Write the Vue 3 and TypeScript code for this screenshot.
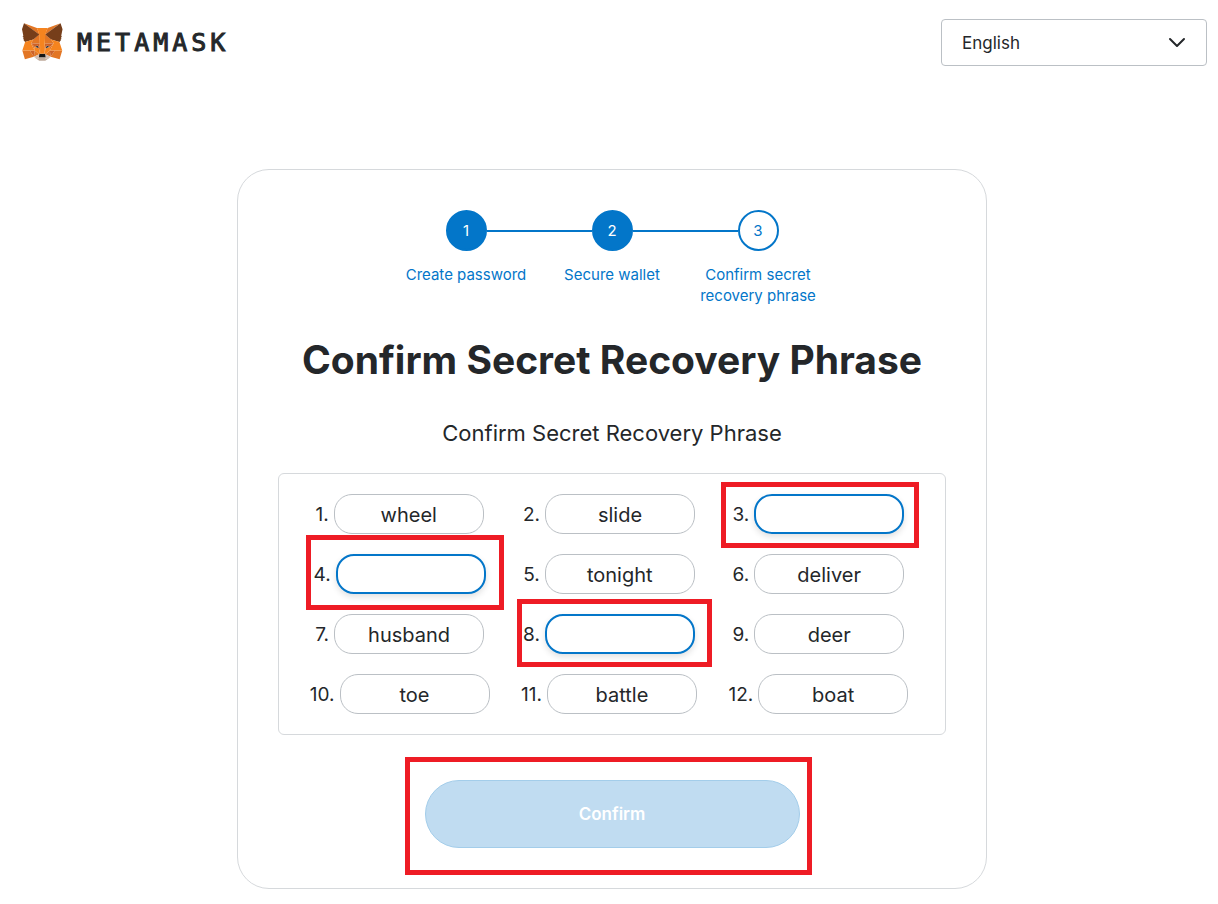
<script setup lang="ts">
import { reactive, ref } from 'vue'

interface Word {
  id: number
  value: string
  blank: boolean
  mark?: string
}

const language = ref('English')
const steps = [
  { label: 'Create password', done: true },
  { label: 'Secure wallet', done: true },
  { label: 'Confirm secret recovery phrase', done: false },
]
const marks: Record<number, string> = { 3: 'mark-third', 4: 'mark-fourth', 8: 'mark-eighth' }
const phrase = ['wheel', 'slide', '', '', 'tonight', 'deliver', 'husband', '', 'deer', 'toe', 'battle', 'boat']
const words = reactive<Word[]>(
  phrase.map((value, i) => ({ id: i + 1, value, blank: value === '', mark: marks[i + 1] })),
)

const foxShapes: { fill: string; d: string }[] = [
  { fill: '#e17726', d: 'M32.958 1l-13.134 9.718 2.442-5.727L32.958 1z' },
  { fill: '#e27625', d: 'M2.663 1l13.017 9.809L13.354 4.99 2.663 1zM28.23 23.533l-3.495 5.338 7.483 2.06 2.143-7.282-6.13-.116zM1.273 23.65l2.13 7.28 7.47-2.059-3.481-5.338-6.12.116z' },
  { fill: '#e27625', d: 'M10.47 14.515l-2.079 3.136 7.405.337-.247-7.969-5.078 4.496zM25.151 14.515l-5.159-4.587-.169 8.06 7.405-.337-2.077-3.136zM10.873 28.871l4.482-2.163-3.858-3.006-.624 5.169zM20.267 26.708l4.469 2.163-.611-5.17-3.858 3.007z' },
  { fill: '#d5bfb2', d: 'M24.736 28.871l-4.469-2.163.364 2.903-.039 1.231 4.144-1.97zM10.873 28.871l4.157 1.97-.026-1.23.35-2.903-4.481 2.163z' },
  { fill: '#233447', d: 'M15.108 21.784l-3.716-1.088 2.625-1.206 1.091 2.294zM20.514 21.784l1.09-2.294 2.638 1.206-3.728 1.088z' },
  { fill: '#cc6228', d: 'M10.873 28.871l.65-5.338-4.131.117 3.481 5.221zM24.098 23.533l.637 5.338 3.495-5.222-4.132-.116zM27.228 17.651l-7.405.337.689 3.796 1.091-2.294 2.638 1.206 2.987-3.045zM11.392 20.696l2.625-1.206 1.091 2.294.688-3.796-7.405-.337 3 3.045z' },
  { fill: '#e27525', d: 'M8.391 17.651l3.105 6.051-.104-3.006-3.001-3.045zM24.241 20.696l-.116 3.006 3.103-6.051-2.987 3.045zM15.797 17.988l-.689 3.796.87 4.477.195-5.9-.376-2.373zM19.823 17.988l-.364 2.36.182 5.913.87-4.477-.688-3.796z' },
  { fill: '#f5841f', d: 'M20.514 21.784l-.871 4.477.624.447 3.858-3.006.117-3.006-3.728 1.088zM11.392 20.696l.104 3.006 3.859 3.006.624-.447-.87-4.477-3.717-1.088z' },
  { fill: '#c0ac9d', d: 'M20.593 30.841l.039-1.231-.338-.285h-4.966l-.324.285.026 1.231-4.157-1.97 1.455 1.192 2.95 2.035h5.053l2.963-2.035 1.442-1.192-4.143 1.97z' },
  { fill: '#161616', d: 'M20.267 26.708l-.624-.447h-3.664l-.624.447-.35 2.903.324-.285h4.966l.338.285-.366-2.903z' },
  { fill: '#763e1a', d: 'M33.517 11.353L34.62 5.99 32.957 1l-12.69 9.394 4.884 4.12 6.898 2.01 1.52-1.776-.663-.48 1.053-.958-.806-.622 1.052-.803-.688-.532zM1 5.99l1.117 5.363-.714.532 1.065.803-.805.622 1.052.959-.663.48 1.52 1.775 6.899-2.01 4.884-4.12L2.663 1 1 5.99z' },
  { fill: '#f5841f', d: 'M32.049 16.525l-6.898-2.01 2.078 3.136-3.103 6.05 4.105-.051h6.131l-2.313-7.125zM10.47 14.515l-6.898 2.01-2.3 7.125h6.12l4.105.051-3.105-6.05 2.078-3.136zM19.823 17.988l.443-7.594 2-5.403h-8.911l2 5.403.442 7.594.169 2.385.013 5.888h3.664l.013-5.888.167-2.385z' },
]
</script>

<template>
  <div class="page">
    <header class="header">
      <div class="brand">
        <svg class="fox" viewBox="1 1 34 32" aria-hidden="true">
          <path v-for="(shape, i) in foxShapes" :key="i" :fill="shape.fill" :d="shape.d" />
        </svg>
        <span class="wordmark">METAMASK</span>
      </div>
      <div class="language">
        <select v-model="language" aria-label="Language">
          <option>English</option>
        </select>
        <svg class="chevron" viewBox="0 0 18 12" aria-hidden="true">
          <path d="M2 2l7 7 7-7" fill="none" stroke="#24272a" stroke-width="2" stroke-linecap="round" stroke-linejoin="round" />
        </svg>
      </div>
    </header>

    <main class="main">
      <form class="card" @submit.prevent>
        <ol class="steps">
          <li v-for="(step, i) in steps" :key="step.label" class="step">
            <div class="track">
              <span class="line" :class="{ hidden: i === 0 }"></span>
              <span class="circle" :class="{ done: step.done }">{{ i + 1 }}</span>
              <span class="line" :class="{ hidden: i === steps.length - 1 }"></span>
            </div>
            <span class="step-label">{{ step.label }}</span>
          </li>
        </ol>

        <h1>Confirm Secret Recovery Phrase</h1>
        <h2>Confirm Secret Recovery Phrase</h2>

        <div class="words">
          <div v-for="word in words" :key="word.id" class="word">
            <label :for="`word-${word.id}`">{{ word.id }}.</label>
            <div class="field">
              <input
                :id="`word-${word.id}`"
                v-model="word.value"
                type="text"
                :class="{ blank: word.blank }"
                :readonly="!word.blank"
                autocomplete="off"
              />
              <span v-if="word.mark" class="mark" :class="word.mark"></span>
            </div>
          </div>
        </div>

        <div class="action">
          <button type="submit" disabled>Confirm</button>
          <span class="mark mark-action"></span>
        </div>
      </form>
    </main>
  </div>
</template>

<style>
body {
  margin: 0;
  background: #fff;
}
</style>

<style scoped>
.page,
.page * {
  box-sizing: border-box;
}

.page {
  font-family: Inter, "Open Sans", sans-serif;
  color: #24272a;
}

.header {
  display: flex;
  justify-content: space-between;
  align-items: center;
  padding: 19px 11px 0 22px;
}

.brand {
  display: flex;
  align-items: center;
  gap: 14px;
}

.fox {
  width: 41px;
  height: 39px;
}

.wordmark {
  font-family: "DejaVu Sans Mono", monospace;
  font-size: 25px;
  line-height: 32px;
  letter-spacing: 4px;
  -webkit-text-stroke: 1px #24272a;
}

.language {
  position: relative;
  width: 266px;
}

.language select {
  display: block;
  width: 100%;
  height: 47px;
  padding: 0 48px 0 20px;
  border: 1px solid #bbc0c5;
  border-radius: 4px;
  background: #fff;
  color: inherit;
  font-family: inherit;
  font-size: 17px;
  appearance: none;
}

.chevron {
  position: absolute;
  top: 18px;
  right: 21px;
  width: 18px;
  height: 12px;
  pointer-events: none;
}

.main {
  display: flex;
  justify-content: center;
  padding: 103px 0 15px 6px;
}

.card {
  display: flex;
  flex-direction: column;
  align-items: center;
  width: 100%;
  max-width: 750px;
  padding: 40px;
  border: 1px solid #d6d9dc;
  border-radius: 32px;
}

.steps {
  display: flex;
  margin: 0;
  padding: 0;
  list-style: none;
  color: #0376c9;
  font-size: 15px;
  line-height: 21px;
}

.step {
  width: 146px;
  text-align: center;
}

.track {
  display: flex;
  align-items: center;
  margin-bottom: 13px;
}

.line {
  flex: 1;
  height: 2px;
  background: #0376c9;
}

.line.hidden {
  visibility: hidden;
}

.circle {
  display: flex;
  align-items: center;
  justify-content: center;
  width: 41px;
  height: 41px;
  border: 2px solid #0376c9;
  border-radius: 50%;
}

.circle.done {
  background: #0376c9;
  color: #fff;
}

.step-label {
  display: block;
  padding: 0 12px;
}

h1 {
  margin: 26px 0 0;
  font-size: 39px;
  line-height: 56px;
  font-weight: 700;
  text-align: center;
}

h2 {
  margin: 28px 0 0;
  font-size: 22px;
  line-height: 34px;
  font-weight: 400;
  text-align: center;
}

.words {
  display: grid;
  grid-template-columns: repeat(3, 1fr);
  gap: 20px 0;
  width: 100%;
  margin-top: 23px;
  padding: 20px 22px 20px 16px;
  border: 1px solid #d6d9dc;
  border-radius: 6px;
  font-size: 19px;
}

.word {
  display: flex;
  align-items: center;
  justify-content: center;
  gap: 5px;
}

.field {
  position: relative;
  width: 150px;
}

.field input {
  display: block;
  width: 100%;
  height: 40px;
  padding: 2px 12px 0;
  border: 1px solid #bbc0c5;
  border-radius: 18px;
  background: #fff;
  color: inherit;
  font-family: inherit;
  font-size: 20px;
  text-align: center;
  outline: none;
}

.field input.blank {
  border: 2px solid #0376c9;
  box-shadow: 0 3px 6px rgba(0, 0, 0, 0.12);
}

.action {
  position: relative;
  width: 375px;
  margin-top: 45px;
}

.action button {
  display: block;
  width: 100%;
  height: 68px;
  border: 1px solid #a3cdea;
  border-radius: 34px;
  background: #c0dcf1;
  color: #fff;
  font-family: inherit;
  font-size: 17px;
  font-weight: 600;
}

/* Red callout frames drawn over the fields that need attention */
.mark {
  position: absolute;
  z-index: 1;
  border: 5px solid #ee1c25;
  pointer-events: none;
}

.mark-third {
  inset: -12px -15px -14px -33px;
}

.mark-fourth {
  inset: -19px -18px -16px -30px;
}

.mark-eighth {
  inset: -15px -17px -13px -28px;
}

.mark-action {
  inset: -23px -12px -27px -20px;
}
</style>
